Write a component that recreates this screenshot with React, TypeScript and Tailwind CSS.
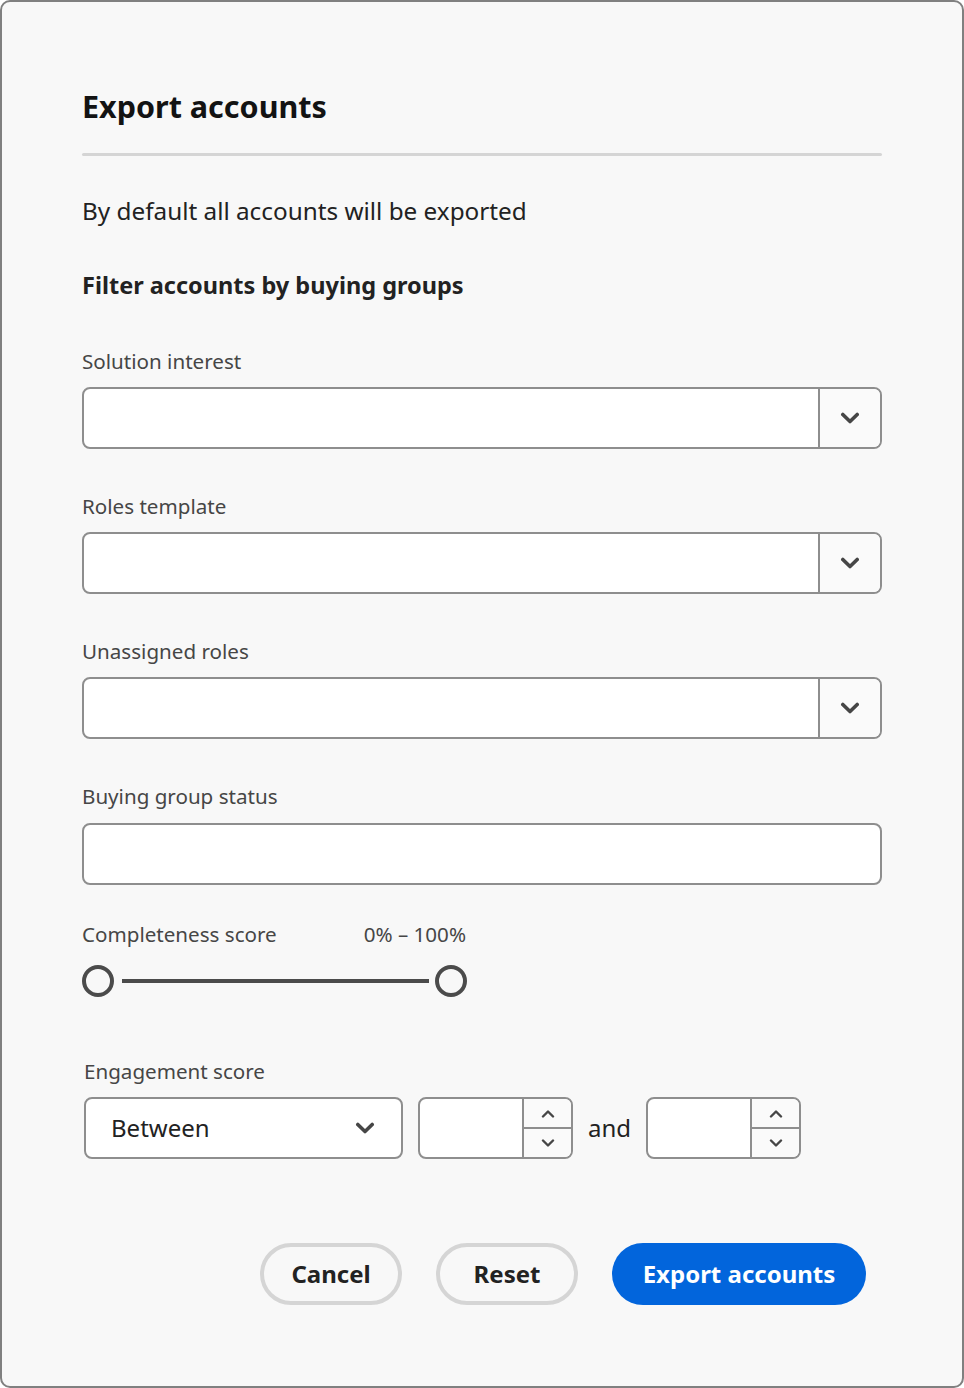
import React from "react";

function Chevron({ className = "" }: { className?: string }) {
  return (
    <svg viewBox="0 0 16 10" className={className} fill="none">
      <path d="M2 2l6 6 6-6" stroke="#464646" strokeWidth="3" strokeLinecap="round" strokeLinejoin="round" />
    </svg>
  );
}

function SmallChevron({ up = false }: { up?: boolean }) {
  return (
    <svg viewBox="0 0 14 9" className="w-[14px] h-[9px]" fill="none">
      <path
        d={up ? "M2 7.5l5-5 5 5" : "M2 1.5l5 5 5-5"}
        stroke="#464646"
        strokeWidth="2.4"
        strokeLinecap="round"
        strokeLinejoin="round"
      />
    </svg>
  );
}

function ComboBox() {
  return (
    <div className="flex h-[62px] w-full rounded-[8px] border-2 border-[#8e8e8e] bg-white overflow-hidden">
      <div className="flex-1" />
      <div className="w-[62px] border-l-2 border-[#8e8e8e] bg-[#fafafa] flex items-center justify-center">
        <Chevron className="w-[20px] h-[12px]" />
      </div>
    </div>
  );
}

function Label({ children, className = "" }: { children: React.ReactNode; className?: string }) {
  return <div className={`text-[20.6px] leading-[32px] text-[#464646] ${className}`}>{children}</div>;
}

function NumberField() {
  return (
    <div className="flex h-[62px] w-[155px] rounded-[8px] border-2 border-[#8e8e8e] bg-white overflow-hidden">
      <div className="flex-1" />
      <div className="w-[49px] border-l-2 border-[#8e8e8e] bg-[#fafafa] flex flex-col">
        <div className="flex-1 flex items-center justify-center border-b-2 border-[#8e8e8e]">
          <SmallChevron up />
        </div>
        <div className="flex-1 flex items-center justify-center">
          <SmallChevron />
        </div>
      </div>
    </div>
  );
}

export default function App() {
  return (
    <div
      className="w-[964px] h-[1388px] rounded-[10px] border-2 border-[#808080] bg-[#f8f8f8] px-[80px] pt-[84px] flex flex-col"
      style={{ fontFamily: '"Noto Sans", "Open Sans", sans-serif' }}
    >
      <h1 className="text-[30.5px] leading-[40px] font-bold text-[#131313]">Export accounts</h1>
      <div className="mt-[27px] h-[3px] bg-[#d5d5d5] rounded-full" />

      <p className="mt-[37px] text-[24.3px] leading-[36px] text-[#222]">By default all accounts will be exported</p>
      <h2 className="mt-[38px] text-[23.5px] leading-[36px] font-bold text-[#222]">Filter accounts by buying groups</h2>

      <Label className="mt-[42px]">Solution interest</Label>
      <div className="mt-[10px]">
        <ComboBox />
      </div>

      <Label className="mt-[41px]">Roles template</Label>
      <div className="mt-[10px]">
        <ComboBox />
      </div>

      <Label className="mt-[41px]">Unassigned roles</Label>
      <div className="mt-[10px]">
        <ComboBox />
      </div>

      <Label className="mt-[41px]">Buying group status</Label>
      <div className="mt-[11px] h-[62px] rounded-[8px] border-2 border-[#8e8e8e] bg-white" />

      <div className="mt-[33px] w-[384px] flex justify-between">
        <Label>Completeness score</Label>
        <Label>0% – 100%</Label>
      </div>
      <div className="mt-[15px] w-[385px] h-[32px] flex items-center">
        <div className="w-[32px] h-[32px] rounded-full border-[4px] border-[#4b4b4b] bg-[#f8f8f8]" />
        <div className="ml-[8px] mr-[6px] flex-1 h-[4px] bg-[#4b4b4b]" />
        <div className="w-[32px] h-[32px] rounded-full border-[4px] border-[#4b4b4b] bg-[#f8f8f8]" />
      </div>

      <Label className="mt-[58px] ml-[2px]">Engagement score</Label>
      <div className="mt-[10px] ml-[2px] flex items-center">
        <div className="w-[319px] h-[62px] rounded-[8px] border-2 border-[#8e8e8e] bg-white flex items-center pl-[25px] pr-[26px]">
          <span className="flex-1 text-[24px] text-[#222]">Between</span>
          <Chevron className="w-[20px] h-[12px]" />
        </div>
        <div className="ml-[15px]">
          <NumberField />
        </div>
        <span className="ml-[15px] mr-[15px] text-[24px] text-[#222]">and</span>
        <NumberField />
      </div>

      <div className="mt-[84px] flex justify-end pr-[16px] gap-[34px]">
        <button className="w-[142px] h-[62px] rounded-full border-[4px] border-[#d5d5d5] text-[24px] font-bold text-[#222]">
          Cancel
        </button>
        <button className="w-[142px] h-[62px] rounded-full border-[4px] border-[#d5d5d5] text-[24px] font-bold text-[#222]">
          Reset
        </button>
        <button className="w-[254px] h-[62px] rounded-full bg-[#0265dc] text-[24px] font-bold text-white">
          Export accounts
        </button>
      </div>
    </div>
  );
}
